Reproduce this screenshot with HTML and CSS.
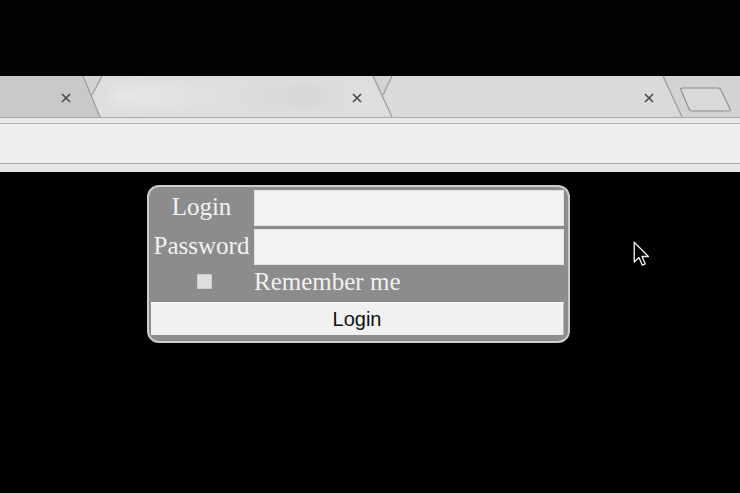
FILE: index.html
```html
<!DOCTYPE html>
<html lang="en">
<head>
<meta charset="utf-8">
<title>Login</title>
<link rel="stylesheet" href="styles.css">
</head>
<body>
  <div class="bezel"></div>

  <div class="browser">
    <div class="tabstrip">
      <div class="tab tab-first">
        <svg class="close" viewBox="0 0 10 10"><path d="M1 1 9 9M9 1 1 9"/></svg>
      </div>
      <div class="tab tab-active">
        <span class="tab-title"></span>
        <svg class="close" viewBox="0 0 10 10"><path d="M1 1 9 9M9 1 1 9"/></svg>
      </div>
      <div class="tab tab-third">
        <svg class="close" viewBox="0 0 10 10"><path d="M1 1 9 9M9 1 1 9"/></svg>
      </div>
      <!-- tab edges and the new-tab button drawn over the strip -->
      <svg class="tab-edges" viewBox="0 0 740 41" preserveAspectRatio="none">
        <path d="M83 0 100 41M102 0 92 19M373 0 392 41M392 0 383 19M663 0 682 41"/>
        <path class="newtab" d="M683 12H718Q720 12 721 14L730 33Q731 35 729 35H692Q690 35 689 33L681 14Q680 12 683 12Z"/>
      </svg>
    </div>
    <div class="toolbar">
      <div class="toolbar-top"></div>
      <div class="toolbar-main"></div>
      <div class="toolbar-bottom"></div>
    </div>
  </div>

  <main class="page">
    <form class="login-box">
      <label class="field-label row-login" for="login">Login</label>
      <input class="field-input row-login" id="login" type="text">
      <label class="field-label" for="password">Password</label>
      <input class="field-input" id="password" type="password">
      <div class="check-cell"><span class="checkbox"></span></div>
      <div class="remember">Remember me</div>
      <button class="submit" type="button">Login</button>
    </form>
  </main>

  <svg class="pointer" viewBox="0 0 13 21">
    <path d="M1 1V17L4.8 13.4 7.6 19.6 10 18.6 7.3 12.5H12.5Z"/>
  </svg>
</body>
</html>
```

FILE: styles.css
```css
html, body {
  margin: 0;
  padding: 0;
  background: #000;
  width: 740px;
  height: 493px;
  overflow: hidden;
}

body {
  position: relative;
  font-family: "Liberation Serif", "Times New Roman", serif;
}

.bezel {
  height: 76px;
  background: #020202;
}

/* ---------- browser chrome ---------- */
.tabstrip {
  position: relative;
  height: 41px;
  display: flex;
  background: #d3d3d3;
  border-bottom: 1px solid #a8a8a8;
}

.tab {
  position: relative;
  display: flex;
  align-items: center;
  justify-content: flex-end;
  box-sizing: border-box;
  padding-right: 29px;
  height: 41px;
}

.tab-first {
  width: 100px;
  background: #c9c9c9;
  clip-path: polygon(0 0, 83px 0, 100px 100%, 0 100%);
  z-index: 3;
}

.tab-active {
  width: 311px;
  margin-left: -19px;
  background: #dedede;
  clip-path: polygon(0 100%, 21px 0, 292px 0, 311px 100%);
  z-index: 2;
  padding-right: 30px;
}

.tab-third {
  width: 309px;
  margin-left: -19px;
  background: #dadada;
  clip-path: polygon(0 100%, 19px 0, 290px 0, 309px 100%);
  z-index: 1;
  padding-right: 28px;
}

/* page title, out of focus */
.tab-title {
  position: absolute;
  left: 30px;
  top: 10px;
  width: 230px;
  height: 20px;
  border-radius: 10px;
  background: linear-gradient(90deg, #e8e8e8 0%, #e4e4e4 25%, #dddddd 55%, #d5d5d5 85%, #dcdcdc 100%);
  filter: blur(6px);
}

.close {
  width: 10px;
  height: 10px;
  margin-top: 2px;
  fill: none;
  stroke: #4b4b4b;
  stroke-width: 1.7;
  position: relative;
}

.tab-edges {
  position: absolute;
  left: 0;
  top: 0;
  width: 740px;
  height: 41px;
  z-index: 4;
  fill: none;
  stroke: #9a9a9a;
  stroke-width: 1.2;
}

.tab-edges .newtab {
  fill: #d9d9d9;
  stroke: #8e8e8e;
}

.toolbar {
  display: flex;
  flex-direction: column;
}

.toolbar-top {
  height: 5px;
  background: #e8e8e8;
  border-bottom: 1px solid #b3b3b3;
}

.toolbar-main {
  height: 39px;
  background: #efefef;
  border-bottom: 1px solid #ababab;
}

.toolbar-bottom {
  height: 8px;
  background: #e6e6e6;
}

/* ---------- page ---------- */
.page {
  padding: 13px 0 0 147px;
}

.login-box {
  width: 423px;
  box-sizing: border-box;
  margin: 0;
  padding: 3px 4px 6px 2px;
  border: 2px solid #cdcdcd;
  border-radius: 12px;
  background: #8c8c8c;
  display: grid;
  grid-template-columns: 101px 1fr;
  grid-template-rows: 39px 34px 39px 33px;
  column-gap: 2px;
}

.field-label {
  display: flex;
  align-items: center;
  justify-content: center;
  font-size: 25px;
  color: #f1f1f1;
  line-height: 1;
  height: 34px;
  padding-bottom: 2px;
  box-sizing: border-box;
}

.field-input {
  margin: 0;
  border: 0;
  height: 34px;
  background: #f2f2f2;
  box-shadow: inset 0 0 0 1px #e2e2e2;
  font: inherit;
}

.check-cell {
  display: flex;
  align-items: center;
  justify-content: center;
  padding-left: 5px;
  padding-bottom: 2px;
}

.checkbox {
  width: 15px;
  height: 15px;
  border-radius: 2px;
  background: #dedede;
  box-shadow: inset 0 0 0 1px #cfcfcf;
}

.remember {
  display: flex;
  align-items: center;
  padding-bottom: 2px;
  font-size: 25px;
  color: #f1f1f1;
}

.submit {
  grid-column: 1 / 3;
  margin: 0;
  border: 0;
  border-top: 1px solid #fafafa;
  border-right: 1px solid #b9b9b9;
  background: #f1f1f1;
  font-family: "Liberation Sans", Arial, sans-serif;
  font-size: 20px;
  color: #121212;
  padding: 0;
}

/* mouse pointer resting on the page */
.pointer {
  position: absolute;
  left: 633px;
  top: 241px;
  width: 16px;
  height: 26px;
  fill: #000;
  stroke: #f0f0f0;
  stroke-width: 1.1;
  stroke-linejoin: round;
}
```
